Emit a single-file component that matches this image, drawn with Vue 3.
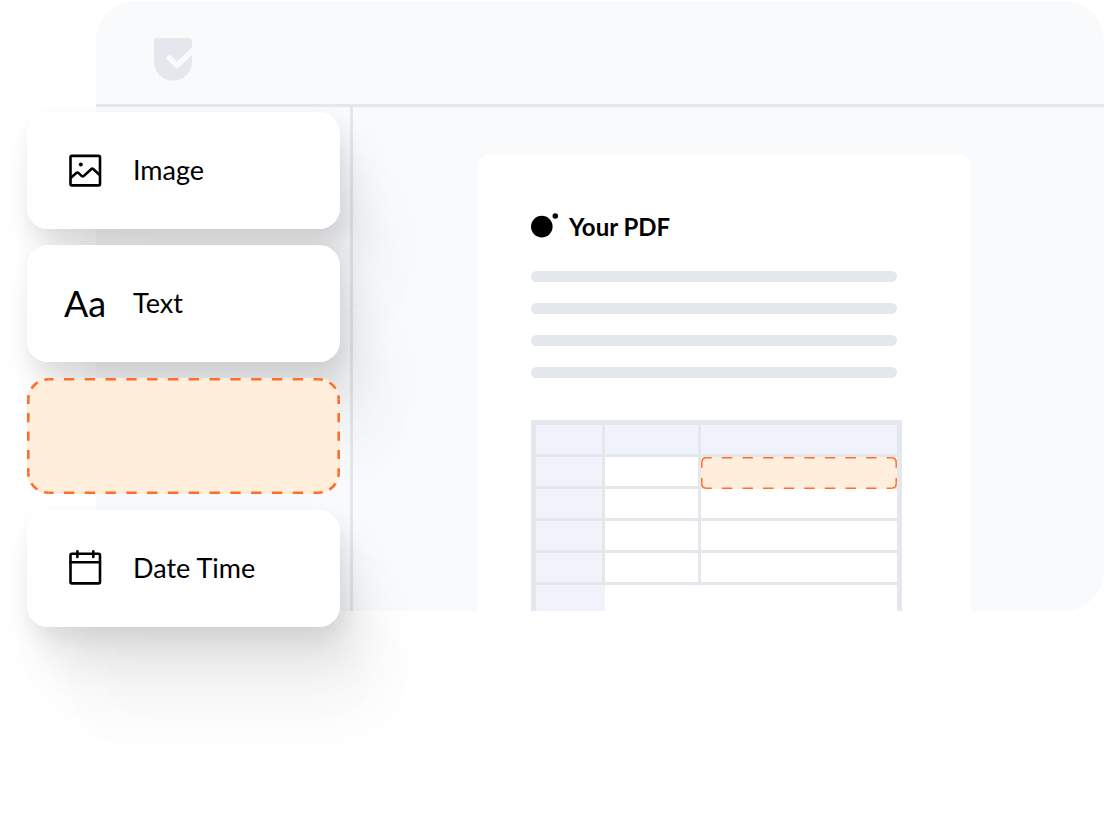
<script setup>
const fields = [
  { id: 'image', label: 'Image' },
  { id: 'text', label: 'Text' },
  { id: 'slot' },
  { id: 'date', label: 'Date Time' },
]
const textLines = 4
const bodyRows = 4
</script>

<template>
  <main class="stage">
    <section class="panel">
      <header class="topbar">
        <svg class="logo" viewBox="0 0 38 43" aria-hidden="true">
          <path d="M3 0H35Q38 0 38 3V9.7L23 23.5L15.3 16.4L11.7 20.3L23 31L38 16.9V23.7A19 19 0 0 1 0 23.7V3Q0 0 3 0Z" />
        </svg>
      </header>
      <div class="workspace">
        <aside class="rail"></aside>
        <div class="canvas">
          <article class="sheet">
            <h1 class="title">
              <svg class="mark" viewBox="0 0 28 38" aria-hidden="true">
                <circle cx="10.8" cy="18.6" r="10.8" />
                <circle cx="24.3" cy="8" r="2.8" />
              </svg>
              Your PDF
            </h1>
            <div class="lines">
              <span v-for="n in textLines" :key="n" class="line"></span>
            </div>
            <table class="grid">
              <colgroup>
                <col class="col-a" />
                <col class="col-b" />
                <col />
              </colgroup>
              <thead>
                <tr>
                  <th></th>
                  <th></th>
                  <th></th>
                </tr>
              </thead>
              <tbody>
                <tr v-for="n in bodyRows" :key="n">
                  <th></th>
                  <td></td>
                  <td>
                    <svg v-if="n === 1" class="target" viewBox="0 0 196 32" preserveAspectRatio="none" aria-hidden="true">
                      <rect class="fill" width="196" height="32" rx="5" />
                      <path d="M.8 5.5Q.8 .8 5.5 .8M190.5 .8Q195.2 .8 195.2 5.5M195.2 26.5Q195.2 31.2 190.5 31.2M5.5 31.2Q.8 31.2 .8 26.5" />
                      <path class="dash" d="M5.5 .8H190.5M5.5 31.2H190.5M.8 5.5V26.5M195.2 5.5V26.5" />
                    </svg>
                  </td>
                </tr>
                <tr class="last">
                  <th></th>
                  <td colspan="2"></td>
                </tr>
              </tbody>
            </table>
          </article>
        </div>
      </div>
    </section>

    <nav class="palette">
      <template v-for="field in fields" :key="field.id">
        <div v-if="field.id === 'slot'" class="slot">
          <svg viewBox="0 0 313 116" aria-hidden="true">
            <rect class="fill" width="313" height="116" rx="21" />
            <path class="dash-h" d="M21.3 1.3H291.7M21.3 114.7H291.7" />
            <path class="dash-v" d="M1.3 21.3V94.7M311.7 21.3V94.7" />
            <path class="dash-c" d="M1.3 21.3A20 20 0 0 1 21.3 1.3" />
            <path class="dash-c" d="M291.7 1.3A20 20 0 0 1 311.7 21.3" />
            <path class="dash-c" d="M311.7 94.7A20 20 0 0 1 291.7 114.7" />
            <path class="dash-c" d="M21.3 114.7A20 20 0 0 1 1.3 94.7" />
          </svg>
        </div>
        <button v-else type="button" class="card">
          <svg v-if="field.id === 'image'" class="icon" viewBox="0 0 42 42" aria-hidden="true">
            <rect x="6.5" y="6.9" width="29.5" height="29.5" rx="1.4" />
            <path d="M6.6 29L12.6 23.8Q13.5 23.1 14.4 23.9L17.8 27.1Q18.7 27.9 19.6 27.1L27.4 20Q28.3 19.2 29.2 20L36 26.3" />
            <circle class="dot" cx="16.8" cy="15.6" r="2" />
          </svg>
          <span v-else-if="field.id === 'text'" class="glyphs" aria-hidden="true">Aa</span>
          <svg v-else class="icon" viewBox="0 0 42 42" aria-hidden="true">
            <rect x="6.5" y="6.8" width="29.5" height="29.6" rx="1.4" />
            <path d="M6.5 15.2H36M13.4 4.4V10M29.3 4.4V10" stroke-linecap="round" />
          </svg>
          <span>{{ field.label }}</span>
        </button>
      </template>
    </nav>
  </main>
</template>

<style>
body {
  margin: 0;
  background: #fff;
}
</style>

<style scoped>
.stage {
  display: grid;
  grid-template-columns: minmax(0, 1fr);
  align-items: start;
  min-height: 100vh;
  box-sizing: border-box;
  overflow: hidden;
  padding-top: 1px;
  font-family: Lato, "Liberation Sans", sans-serif;
  color: #000;
}
.panel {
  grid-area: 1 / 1;
  margin-left: 96px;
  background: #f9fafc;
  border-radius: 40px 40px 40px 0;
  overflow: hidden;
}
.topbar {
  padding: 37px 58px 23px;
  border-bottom: 3px solid #e4e7ec;
}
.logo {
  display: block;
  width: 38px;
  height: 43px;
  fill: #e4e7ec;
}
.workspace {
  display: flex;
}
.rail {
  flex: 0 0 254px;
  border-right: 3px solid #e4e7ec;
}
.canvas {
  flex: 1;
  min-width: 0;
  padding: 48px 133px 0 125px;
}
.sheet {
  padding: 53px 69px 0 53px;
  background: #fff;
  border-radius: 10px 10px 0 0;
}
.title {
  display: flex;
  align-items: center;
  gap: 10px;
  height: 38px;
  margin: 0 0 25px;
  font-size: 24px;
  font-weight: 700;
  line-height: 38px;
  white-space: nowrap;
}
.mark {
  width: 28px;
  height: 38px;
}
.lines {
  display: grid;
  gap: 21px;
  margin: 0 5px 42px 0;
}
.line {
  height: 11px;
  border-radius: 6px;
  background: #e4e7ec;
}
.grid {
  width: 100%;
  table-layout: fixed;
  border-collapse: separate;
  border-spacing: 0;
  border: 5px solid #e4e7ec;
  border-bottom: 0;
}
.col-a {
  width: 69px;
}
.col-b {
  width: 96px;
}
.grid th,
.grid td {
  position: relative;
  box-sizing: border-box;
  height: 32px;
  padding: 0;
  border-right: 3px solid #e4e7ec;
  border-bottom: 3px solid #e4e7ec;
}
.grid th {
  background: #f0f3fb;
}
.grid th:last-child,
.grid td:last-child {
  border-right: 0;
}
.grid .last th,
.grid .last td {
  height: 26px;
  border: 0;
}
.target {
  position: absolute;
  inset: 0 0 -3px;
  width: 100%;
  height: 32px;
}
.target path {
  fill: none;
  stroke: #ff6c2c;
  stroke-width: 1.5;
}
.fill {
  fill: #ffeedb;
}
.target .dash {
  stroke-dasharray: 10.4 10.2;
  stroke-dashoffset: 5.2;
}
.palette {
  grid-area: 1 / 1;
  isolation: isolate;
  display: grid;
  gap: 16px;
  width: 313px;
  margin: 111px 0 0 27px;
}
.card {
  position: relative;
  display: flex;
  align-items: center;
  gap: 27px;
  height: 117px;
  padding: 0 37px 2px;
  border: 0;
  border-radius: 21px;
  background: #fff;
  color: #000;
  font: 400 27px/32px Lato, "Liberation Sans", sans-serif;
  cursor: grab;
}
.card::before {
  content: "";
  position: absolute;
  z-index: -1;
  inset: 0;
  border-radius: 21px;
  box-shadow:
    3px 10px 22px rgba(0, 0, 0, 0.08),
    14px 34px 44px rgba(0, 0, 0, 0.08),
    34px 74px 64px rgba(0, 0, 0, 0.04),
    54px 110px 76px rgba(0, 0, 0, 0.01);
}
.icon {
  width: 42px;
  height: 42px;
  fill: none;
  stroke: #000;
  stroke-width: 2.6;
}
.icon .dot {
  fill: #000;
  stroke: none;
}
.glyphs {
  width: 42px;
  font-size: 36px;
}
.slot svg {
  display: block;
  width: 100%;
  height: 116px;
}
.slot path {
  fill: none;
  stroke: #ff6c2c;
  stroke-width: 2.6;
}
.slot .dash-h {
  stroke-dasharray: 10.4;
  stroke-dashoffset: 5.2;
}
.slot .dash-v {
  stroke-dasharray: 9.2;
  stroke-dashoffset: 4.6;
}
.slot .dash-c {
  stroke-dasharray: 8.6 7.1;
  stroke-dashoffset: 4.3;
}
</style>
